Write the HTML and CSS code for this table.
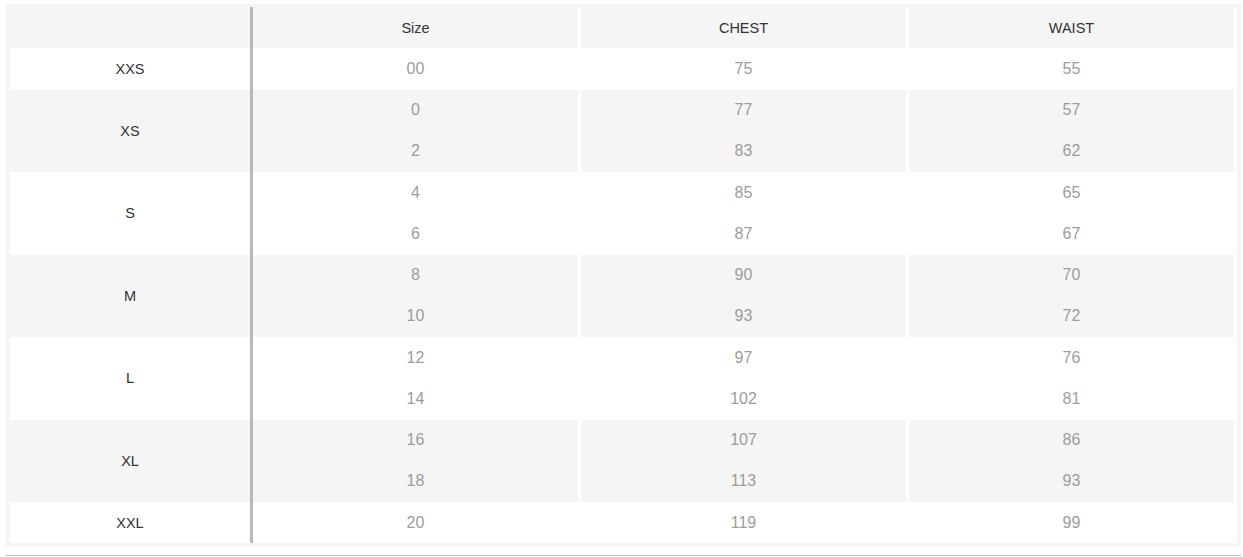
FILE: index.html
```html
<!DOCTYPE html>
<html lang="en">
<head>
<meta charset="utf-8">
<title>Size chart</title>
<link rel="stylesheet" href="styles.css">
</head>
<body>
<div class="wrap">
  <table class="chart">
    <colgroup>
      <col class="c-label"><col class="c-data"><col class="c-data"><col class="c-data">
    </colgroup>
    <tbody>
      <tr class="gray head">
        <td class="label"></td><td>Size</td><td>CHEST</td><td>WAIST</td>
      </tr>
      <tr class="white">
        <td class="label">XXS</td><td class="num">00</td><td class="num">75</td><td class="num">55</td>
      </tr>
      <tr class="gray">
        <td class="label" rowspan="2">XS</td><td class="num">0</td><td class="num">77</td><td class="num">57</td>
      </tr>
      <tr class="gray">
        <td class="num">2</td><td class="num">83</td><td class="num">62</td>
      </tr>
      <tr class="white">
        <td class="label" rowspan="2">S</td><td class="num">4</td><td class="num">85</td><td class="num">65</td>
      </tr>
      <tr class="white">
        <td class="num">6</td><td class="num">87</td><td class="num">67</td>
      </tr>
      <tr class="gray">
        <td class="label" rowspan="2">M</td><td class="num">8</td><td class="num">90</td><td class="num">70</td>
      </tr>
      <tr class="gray">
        <td class="num">10</td><td class="num">93</td><td class="num">72</td>
      </tr>
      <tr class="white">
        <td class="label" rowspan="2">L</td><td class="num">12</td><td class="num">97</td><td class="num">76</td>
      </tr>
      <tr class="white">
        <td class="num">14</td><td class="num">102</td><td class="num">81</td>
      </tr>
      <tr class="gray">
        <td class="label" rowspan="2">XL</td><td class="num">16</td><td class="num">107</td><td class="num">86</td>
      </tr>
      <tr class="gray">
        <td class="num">18</td><td class="num">113</td><td class="num">93</td>
      </tr>
      <tr class="white">
        <td class="label">XXL</td><td class="num">20</td><td class="num">119</td><td class="num">99</td>
      </tr>
    </tbody>
  </table>
</div>
<div class="rule"></div>
</body>
</html>
```

FILE: styles.css
```css
html, body {
  margin: 0;
  padding: 0;
  background: #ffffff;
}

body {
  font-family: "Liberation Sans", Arial, sans-serif;
  font-size: 14.5px;
  color: #333333;
}

.wrap {
  margin: 4px 0 0 6px;
  width: 1235px;
  box-sizing: border-box;
  padding: 3px 4px 4px 4px;
  background: #f5f5f5;
}

.chart {
  width: 100%;
  border-collapse: separate;
  border-spacing: 0;
  table-layout: fixed;
}

.c-label {
  width: 243px;
}

.c-data {
  width: 328px;
}

.chart tr {
  height: 41.25px;
}

.chart td {
  padding: 0;
  text-align: center;
  vertical-align: middle;
  border-right: 3px solid #ffffff;
  line-height: 18px;
}

.chart td.label {
  border-right: 3px solid #b8b8b8;
  color: #333333;
}

.chart tr.gray td {
  background: #f5f5f5;
}

.chart tr.white td {
  background: #ffffff;
}

.chart td.num {
  color: #a09c98;
  font-size: 16px;
}

.chart tr.head td {
  color: #333333;
}

.rule {
  margin: 8px 0 0 6px;
  width: 1235px;
  border-top: 1px solid #bdbdbd;
}
```
